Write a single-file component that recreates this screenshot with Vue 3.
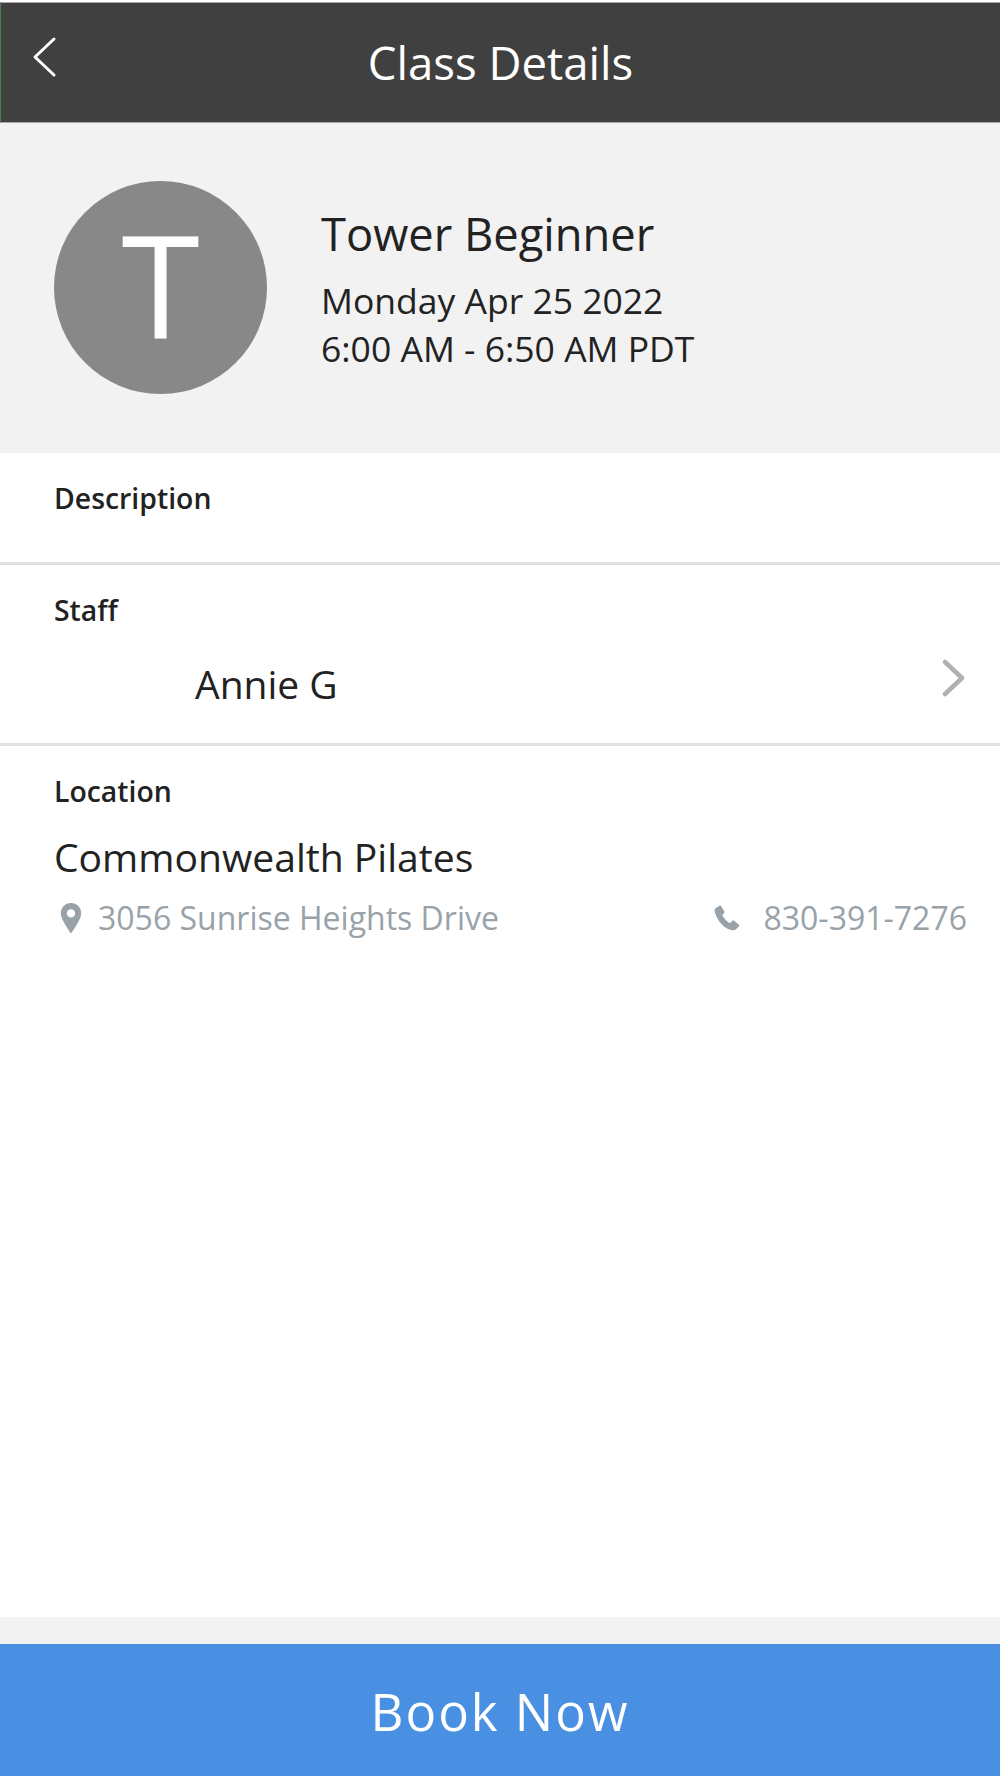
<script setup>
</script>

<template>
  <div class="page">
    <header class="topbar">
      <svg class="back" width="26" height="44" viewBox="0 0 26 44" aria-hidden="true">
        <path d="M22 3 L3 21 L22 39" fill="none" stroke="#fff" stroke-width="3" stroke-linecap="round" stroke-linejoin="round" />
      </svg>
      <h1 class="title">Class Details</h1>
    </header>

    <section class="hero">
      <div class="avatar">T</div>
      <div class="hero-text">
        <div class="class-name">Tower Beginner</div>
        <div class="class-time">Monday Apr 25 2022</div>
        <div class="class-time">6:00 AM - 6:50 AM PDT</div>
      </div>
    </section>

    <section class="block description">
      <div class="label">Description</div>
    </section>

    <section class="block staff">
      <div class="label">Staff</div>
      <div class="staff-row">
        <span class="staff-name">Annie G</span>
        <svg class="chevron" width="24" height="38" viewBox="0 0 24 38" aria-hidden="true">
          <path d="M3 3 L20 19 L3 35" fill="none" stroke="#b0b0b0" stroke-width="4.500" stroke-linecap="round" stroke-linejoin="round" />
        </svg>
      </div>
    </section>

    <section class="block location">
      <div class="label">Location</div>
      <div class="loc-name">Commonwealth Pilates</div>
      <div class="loc-row">
        <span class="meta">
          <svg class="pin" width="22" height="32" viewBox="0 0 22 32" aria-hidden="true">
            <path fill-rule="evenodd" fill="#98a2a8" d="M11 1C5.2 1 .8 5.500 .8 11.200C.8 16.500 7 26 11 31.500C15 26 21.200 16.500 21.200 11.200C21.200 5.500 16.800 1 11 1ZM11 7.200A4.200 4.200 0 1 1 11 15.600A4.200 4.200 0 1 1 11 7.200Z" />
          </svg>
          <span>3056 Sunrise Heights Drive</span>
        </span>
        <span class="meta phone">
          <svg class="phone-icon" width="26" height="26" viewBox="0 0 26 26" aria-hidden="true">
            <path fill="#98a2a8" d="M5.500 .8L1.500 3.300C.6 4 .4 5.200.8 7C2.200 12 4.800 16.500 8.200 19.800C11.500 23 15.800 25.500 19.500 25.300C21 25.200 22.500 24 25 21.300C25.500 20.700 25.400 20 24.800 19.500L20 15.800C19.400 15.400 18.700 15.400 18.200 15.900L15.800 18.200C13 16.500 9.800 13.200 8.300 10.200L10.200 7.800C10.600 7.300 10.600 6.700 10.300 6.200L7.300 1.300C6.900 .6 6.100 .4 5.500 .8Z" />
          </svg>
          <span>830-391-7276</span>
        </span>
      </div>
    </section>

    <div class="spacer"></div>

    <footer class="footer">
      <div class="footer-gap"></div>
      <button class="book" type="button">Book Now</button>
    </footer>
  </div>
</template>

<style>
html, body { margin: 0; background: #fff; }
</style>

<style scoped>
.page {
  width: 1000px;
  height: 1778px;
  display: flex;
  flex-direction: column;
  padding-top: 2px;
  box-sizing: border-box;
  background: #fff;
  font-family: "Open Sans", "Liberation Sans", sans-serif;
  color: #222;
}
.topbar {
  height: 121px;
  flex: none;
  background: #404040;
  border-top: 1px solid #a8a8a8;
  border-bottom: 1px solid #a8a8a8;
  border-left: 1px solid #4f7f4f;
  box-sizing: border-box;
  display: flex;
  align-items: center;
  justify-content: center;
  position: relative;
}
.back {
  position: absolute;
  left: 31px;
  top: 33px;
}
.title {
  margin: 0;
  color: #fff;
  font-size: 45.500px;
  font-weight: 400;
  line-height: 1;
}
.hero {
  height: 330px;
  flex: none;
  background: #f2f2f2;
  display: flex;
  align-items: center;
  padding-left: 54px;
  box-sizing: border-box;
  gap: 54px;
}
.avatar {
  width: 213px;
  height: 213px;
  margin-bottom: 2px;
  border-radius: 50%;
  background: #888;
  color: #fff;
  font-size: 142px;
  line-height: 207px;
  text-align: center;
  flex: none;
}
.class-name {
  font-size: 45.300px;
  line-height: 60px;
  margin-bottom: 12px;
}
.class-time {
  font-size: 35.500px;
  line-height: 48px;
}
.block {
  flex: none;
  box-sizing: border-box;
  padding-left: 54px;
}
.label {
  font-size: 28.400px;
  font-weight: 600;
  line-height: 38px;
}
.description {
  height: 112px;
  padding-top: 26px;
  border-bottom: 3px solid #e0e0e0;
}
.staff {
  height: 181px;
  padding-top: 26px;
  border-bottom: 3px solid #e0e0e0;
}
.staff-row {
  display: flex;
  align-items: center;
  justify-content: space-between;
  padding-left: 141px;
  padding-right: 34px;
  margin-top: 28px;
}
.staff-name {
  font-size: 39px;
  line-height: 54px;
}
.chevron {
  margin-bottom: 12px;
}
.location {
  padding-top: 26px;
  padding-right: 33px;
}
.loc-name {
  font-size: 39.100px;
  line-height: 54px;
  margin-top: 20px;
}
.loc-row {
  display: flex;
  align-items: center;
  justify-content: space-between;
  margin-top: 12px;
  color: #98a2a8;
  font-size: 32px;
  line-height: 44px;
}
.meta {
  display: flex;
  align-items: center;
}
.pin {
  margin-left: 6px;
  margin-right: 16px;
}
.phone-icon {
  margin-right: 23px;
}
.spacer {
  flex: 1;
}
.footer {
  flex: none;
}
.footer-gap {
  height: 27px;
  background: #f2f2f2;
}
.book {
  display: block;
  width: 100%;
  height: 132px;
  border: 0;
  padding: 2px 0 0;
  margin-bottom: 2px;
  background: #4a90e2;
  color: #fff;
  font-family: inherit;
  font-size: 51px;
  letter-spacing: 2px;
}
</style>
